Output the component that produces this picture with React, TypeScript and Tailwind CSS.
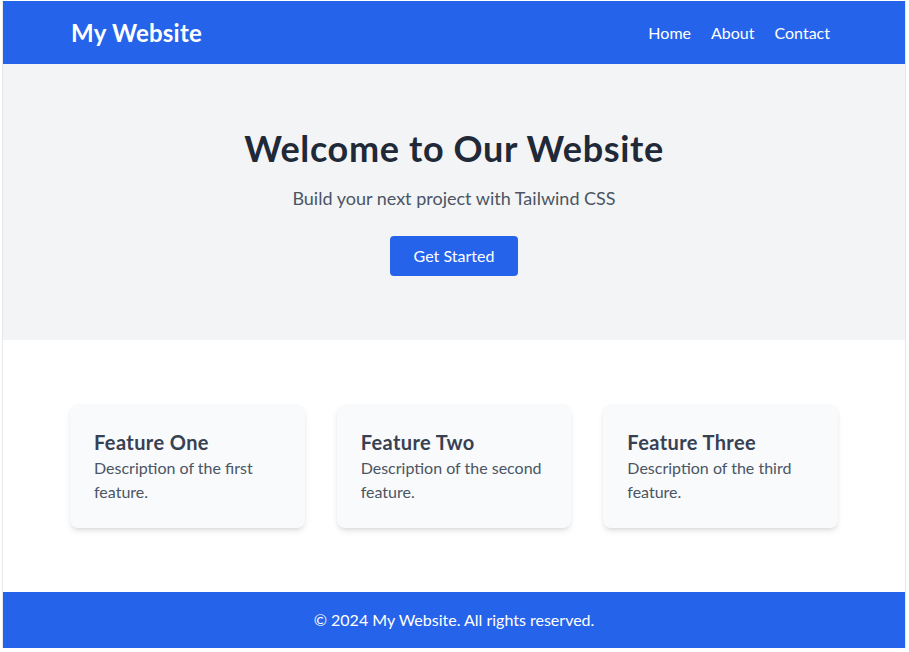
export default function App() {
  const features = [
    { title: 'Feature One', text: 'Description of the first feature.' },
    { title: 'Feature Two', text: 'Description of the second feature.' },
    { title: 'Feature Three', text: 'Description of the third feature.' },
  ];

  return (
    <div className="bg-white min-h-[652px] pl-[2px] pt-px pr-[3px] pb-[4px] font-['Lato',sans-serif]">
      <div className="border-l border-r border-[#e5e7eb]">
        {/* Header */}
        <header className="bg-[#2563eb] text-white">
          <div className="w-[768px] mx-auto flex items-center justify-between h-[63px]">
            <h1 className="text-2xl font-bold pl-px tracking-[0.01em]">My Website</h1>
            <nav className="flex gap-5 pr-2">
              <a href="#">Home</a>
              <a href="#">About</a>
              <a href="#">Contact</a>
            </nav>
          </div>
        </header>

        {/* Hero */}
        <section className="bg-[#f3f4f6] py-16 text-center">
          <h2 className="text-4xl font-bold text-[#1f2937] mb-4 tracking-[0.018em]">Welcome to Our Website</h2>
          <p className="text-lg text-[#4b5563] mb-6">Build your next project with Tailwind CSS</p>
          <button className="bg-[#2563eb] text-white px-6 py-2 rounded">Get Started</button>
        </section>

        {/* Features */}
        <section className="py-16">
          <div className="w-[768px] mx-auto grid grid-cols-3 gap-8">
            {features.map((f) => (
              <div key={f.title} className="bg-[#f8fafc] rounded-lg shadow-md p-6">
                <h3 className="text-xl font-bold text-[#374151] tracking-[0.02em]">{f.title}</h3>
                <p className="text-[#4b5563]">{f.text}</p>
              </div>
            ))}
          </div>
        </section>

        {/* Footer */}
        <footer className="bg-[#2563eb] text-white text-center py-4">
          <p>© 2024 My Website. All rights reserved.</p>
        </footer>
      </div>
    </div>
  );
}
